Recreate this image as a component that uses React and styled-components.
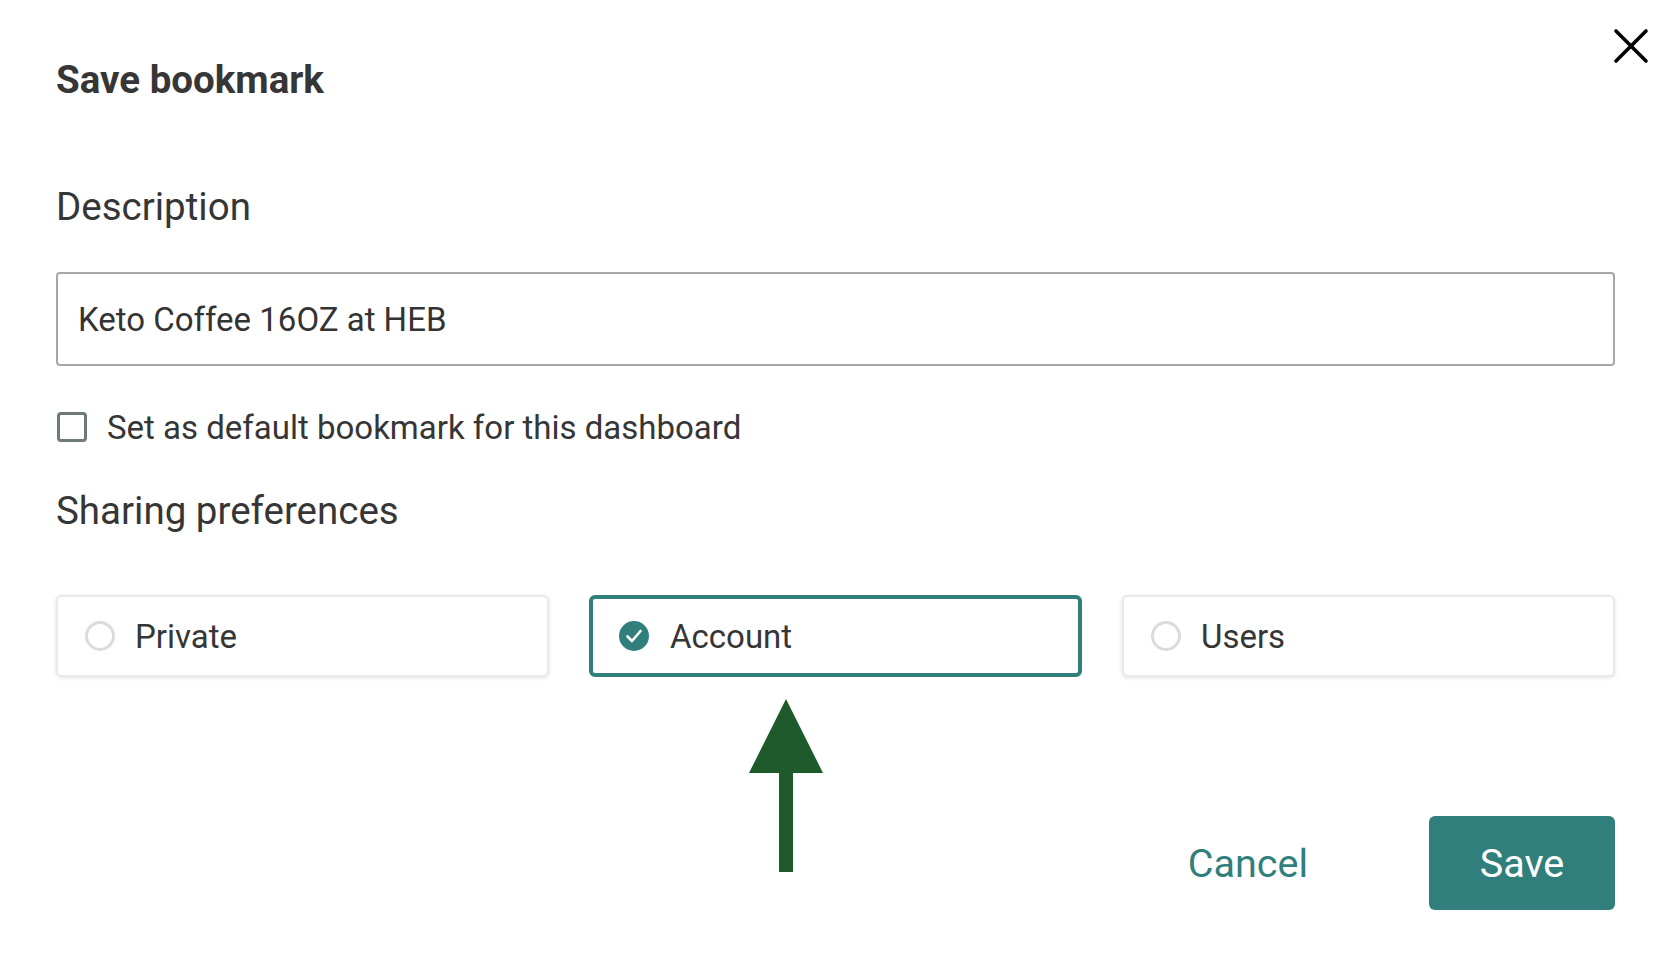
import React, { useState } from "react";
import styled, { createGlobalStyle } from "styled-components";

const GlobalStyle = createGlobalStyle`
  html, body {
    margin: 0;
    padding: 0;
    background: #ffffff;
  }
  body {
    font-family: Roboto, "Liberation Sans", Arial, sans-serif;
    color: #363636;
  }
`;

const TEAL = "#317f7c";

const options = [
  { id: "private", label: "Private" },
  { id: "account", label: "Account" },
  { id: "users", label: "Users" },
];

const CloseIcon = () => (
  <svg width="36" height="36" viewBox="0 0 36 36">
    <path
      d="M3 3 L33 33 M33 3 L3 33"
      stroke="#000"
      strokeWidth="3.6"
      strokeLinecap="round"
      fill="none"
    />
  </svg>
);

const CheckedRadio = () => (
  <svg width="32" height="32" viewBox="0 0 32 32">
    <circle cx="16" cy="16" r="15" fill={TEAL} />
    <path
      d="M9.5 16.5 L14 21 L22.5 11"
      stroke="#fff"
      strokeWidth="2.6"
      strokeLinecap="round"
      strokeLinejoin="round"
      fill="none"
    />
  </svg>
);

const UpArrow = () => (
  <svg width="76" height="174" viewBox="0 0 76 174">
    <polygon points="38,0 75,74 1,74" fill="#1f5a2c" />
    <rect x="31" y="73" width="14" height="100" fill="#1f5a2c" />
  </svg>
);

export default function App() {
  const [choice, setChoice] = useState("account");
  const [isDefault, setIsDefault] = useState(false);

  return (
    <>
      <GlobalStyle />
      <Dialog>
        <Header>
          <Title>Save bookmark</Title>
          <CloseButton aria-label="Close">
            <CloseIcon />
          </CloseButton>
        </Header>

        <Label>Description</Label>
        <TextInput defaultValue="Keto Coffee 16OZ at HEB" />

        <CheckRow onClick={() => setIsDefault(!isDefault)}>
          <Checkbox $checked={isDefault} />
          <CheckText>Set as default bookmark for this dashboard</CheckText>
        </CheckRow>

        <SectionLabel>Sharing preferences</SectionLabel>
        <Options>
          {options.map((o) => (
            <OptionCard
              key={o.id}
              $selected={choice === o.id}
              onClick={() => setChoice(o.id)}
            >
              {choice === o.id ? <CheckedRadio /> : <EmptyRadio />}
              <OptionText>{o.label}</OptionText>
              {o.id === "account" && (
                <Annotation>
                  <UpArrow />
                </Annotation>
              )}
            </OptionCard>
          ))}
        </Options>

        <Footer>
          <CancelButton>Cancel</CancelButton>
          <SaveButton>Save</SaveButton>
        </Footer>
      </Dialog>
    </>
  );
}

const Dialog = styled.div`
  display: flex;
  flex-direction: column;
  padding: 0 61px 52px 56px;
  min-height: 966px;
  box-sizing: border-box;
`;

const Header = styled.div`
  display: flex;
  justify-content: space-between;
  align-items: flex-start;
`;

const Title = styled.h1`
  margin: 58px 0 0;
  font-size: 38.5px;
  line-height: 44px;
  font-weight: 700;
  color: #363636;
`;

const CloseButton = styled.button`
  margin: 28px -34px 0 0;
  padding: 0;
  border: none;
  background: none;
  display: flex;
  cursor: pointer;
`;

const Label = styled.div`
  margin-top: 83px;
  font-size: 38.5px;
  line-height: 44px;
  color: #363636;
`;

const SectionLabel = styled(Label)`
  margin-top: 40px;
`;

const TextInput = styled.input`
  margin-top: 43px;
  height: 94px;
  box-sizing: border-box;
  border: 2px solid #a7a7a7;
  border-radius: 4px;
  padding: 0 20px;
  font-family: Roboto, "Liberation Sans", Arial, sans-serif;
  font-size: 33px;
  color: #333;
  outline: none;
`;

const CheckRow = styled.label`
  margin-top: 39px;
  display: flex;
  align-items: center;
  gap: 20px;
  height: 44px;
  cursor: pointer;
`;

const Checkbox = styled.span`
  width: 30px;
  height: 30px;
  box-sizing: border-box;
  border: 3px solid ${(p) => (p.$checked ? TEAL : "#6f7b7b")};
  background: ${(p) => (p.$checked ? TEAL : "#fff")};
  border-radius: 4px;
  margin-left: 1px;
`;

const CheckText = styled.span`
  font-size: 33px;
  color: #363636;
`;

const Options = styled.div`
  margin-top: 62px;
  display: grid;
  grid-template-columns: repeat(3, 1fr);
  gap: 40px;
`;

const OptionCard = styled.div`
  position: relative;
  height: 82px;
  box-sizing: border-box;
  display: flex;
  align-items: center;
  gap: 20px;
  padding: 0 ${(p) => (p.$selected ? "25px" : "27px")};
  border: ${(p) =>
    p.$selected ? `4px solid ${TEAL}` : "2px solid #e9e9e9"};
  border-radius: 6px;
  box-shadow: ${(p) =>
    p.$selected ? "none" : "0 1px 4px rgba(0, 0, 0, 0.12)"};
  background: #fff;
  cursor: pointer;
`;

const EmptyRadio = styled.span`
  width: 30px;
  height: 30px;
  box-sizing: border-box;
  border: 3px solid #d9dbde;
  border-radius: 50%;
`;

const OptionText = styled.span`
  font-size: 33px;
  color: #363636;
`;

const Annotation = styled.div`
  position: absolute;
  left: 155px;
  top: 100px;
  display: flex;
`;

const Footer = styled.div`
  margin-top: 139px;
  display: flex;
  justify-content: flex-end;
  align-items: center;
  gap: 121px;
`;

const CancelButton = styled.button`
  border: none;
  background: none;
  padding: 0;
  font-family: Roboto, "Liberation Sans", Arial, sans-serif;
  font-size: 39.5px;
  color: ${TEAL};
  cursor: pointer;
`;

const SaveButton = styled.button`
  width: 186px;
  height: 94px;
  border: none;
  border-radius: 6px;
  background: ${TEAL};
  color: #fff;
  font-family: Roboto, "Liberation Sans", Arial, sans-serif;
  font-size: 39.5px;
  cursor: pointer;
`;
